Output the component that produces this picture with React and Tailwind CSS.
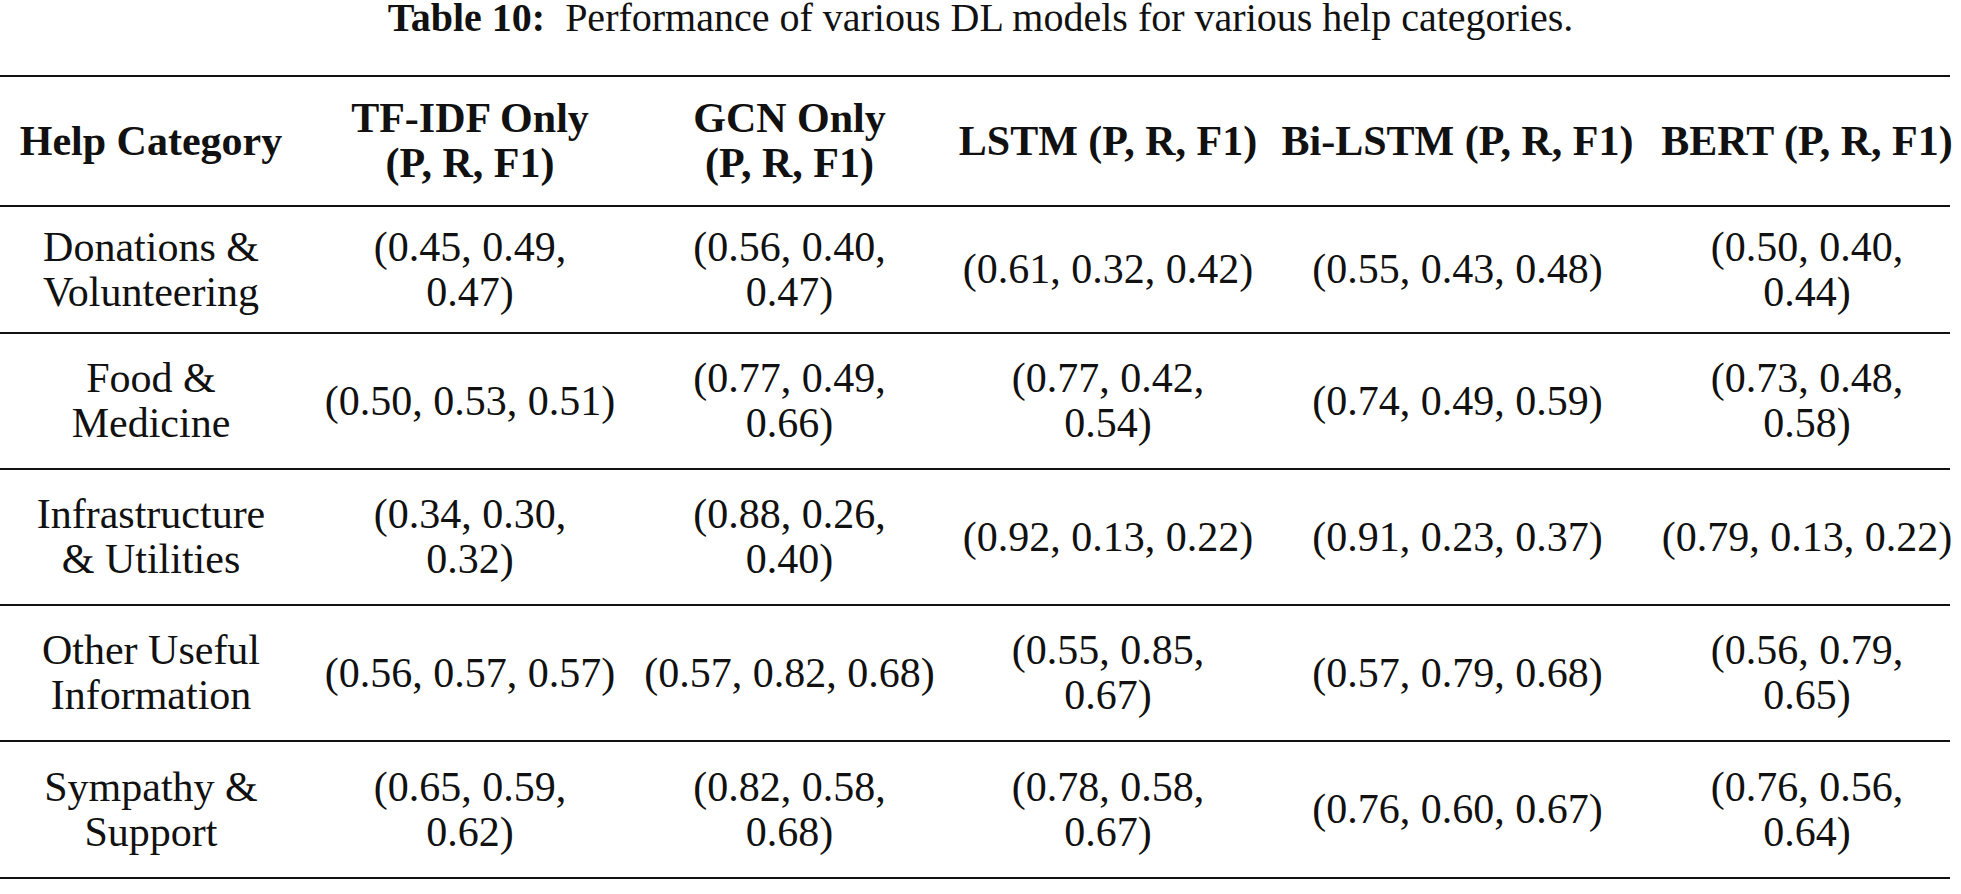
import React from 'react';

const cols = 'grid grid-cols-[310px_320px_319px_334px_349px_318px]';

const header = [
  ['Help Category'],
  ['TF-IDF Only', '(P, R, F1)'],
  ['GCN Only', '(P, R, F1)'],
  ['LSTM (P, R, F1)'],
  ['Bi-LSTM (P, R, F1)'],
  ['BERT (P, R, F1)'],
];

const rows = [
  {
    h: 'h-[127px]',
    cells: [
      ['Donations &', 'Volunteering'],
      ['(0.45, 0.49,', '0.47)'],
      ['(0.56, 0.40,', '0.47)'],
      ['(0.61, 0.32, 0.42)'],
      ['(0.55, 0.43, 0.48)'],
      ['(0.50, 0.40,', '0.44)'],
    ],
  },
  {
    h: 'h-[136px]',
    cells: [
      ['Food &', 'Medicine'],
      ['(0.50, 0.53, 0.51)'],
      ['(0.77, 0.49,', '0.66)'],
      ['(0.77, 0.42,', '0.54)'],
      ['(0.74, 0.49, 0.59)'],
      ['(0.73, 0.48,', '0.58)'],
    ],
  },
  {
    h: 'h-[136px]',
    cells: [
      ['Infrastructure', '& Utilities'],
      ['(0.34, 0.30,', '0.32)'],
      ['(0.88, 0.26,', '0.40)'],
      ['(0.92, 0.13, 0.22)'],
      ['(0.91, 0.23, 0.37)'],
      ['(0.79, 0.13, 0.22)'],
    ],
  },
  {
    h: 'h-[136px]',
    cells: [
      ['Other Useful', 'Information'],
      ['(0.56, 0.57, 0.57)'],
      ['(0.57, 0.82, 0.68)'],
      ['(0.55, 0.85,', '0.67)'],
      ['(0.57, 0.79, 0.68)'],
      ['(0.56, 0.79,', '0.65)'],
    ],
  },
  {
    h: 'h-[137px]',
    cells: [
      ['Sympathy &', 'Support'],
      ['(0.65, 0.59,', '0.62)'],
      ['(0.82, 0.58,', '0.68)'],
      ['(0.78, 0.58,', '0.67)'],
      ['(0.76, 0.60, 0.67)'],
      ['(0.76, 0.56,', '0.64)'],
    ],
  },
];

// nudges so the column text lands where the typeset table has it
const pads = ['pr-[8px]', '', '', 'pr-[16px]', '', 'pl-[32px]'];

const Cell = ({ lines, i }) => (
  <div className={`flex flex-col items-center justify-center text-center whitespace-nowrap ${pads[i]}`}>
    {lines.map((l) => (
      <span key={l}>{l}</span>
    ))}
  </div>
);

export default function App() {
  return (
    <div className="w-[1961px] h-[894px] bg-white text-[#111] font-['Liberation_Serif',serif] overflow-hidden">
      <p className="h-[36px] text-center text-[40px] leading-[36px] whitespace-nowrap">
        <b>Table 10:</b>&nbsp; Performance of various DL models for various help categories.
      </p>

      <div className="mt-[39px] w-[1950px] border-t-2 border-[#111] text-[42px] leading-[45px]">
        <div className={`${cols} h-[130px] border-b-2 border-[#111] font-bold`}>
          {header.map((c, i) => (
            <Cell key={i} lines={c} i={i} />
          ))}
        </div>
        {rows.map((r, ri) => (
          <div key={ri} className={`${cols} ${r.h} border-b-2 border-[#111]`}>
            {r.cells.map((c, i) => (
              <Cell key={i} lines={c} i={i} />
            ))}
          </div>
        ))}
      </div>
    </div>
  );
}
